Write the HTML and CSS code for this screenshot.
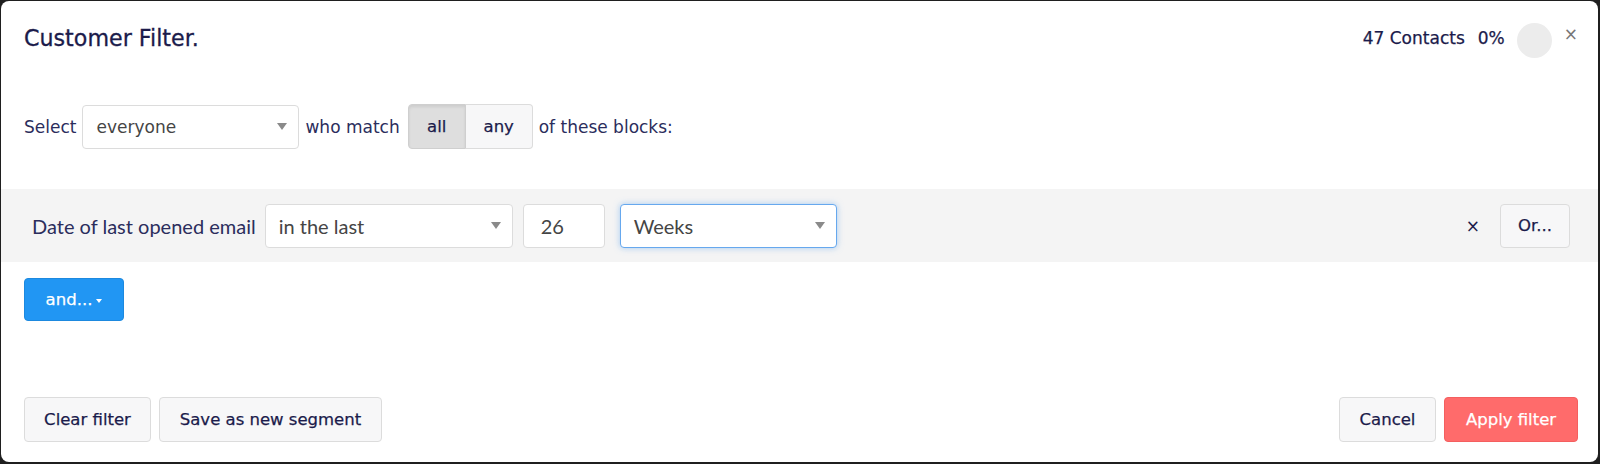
FILE: index.html
```html
<!DOCTYPE html>
<html lang="en">
<head>
    <meta charset="UTF-8">
    <meta name="viewport" content="width=device-width, initial-scale=1.0">
    <title>Customer Filter</title>

    <link rel="stylesheet" href="styles.css">
</head>
<body>

<div class="modal">
    <header class="modal-header">
        <h1 class="title">Customer Filter.</h1>
        <div class="stats">
            <span class="count">47 Contacts</span>
            <span class="percent">0%</span>
            <span class="progress"></span>
            <span class="close">&times;</span>
        </div>
    </header>

    <div class="match-row">
        <span class="label">Select</span>
        <div class="dropdown dropdown-who"><span>everyone</span><i class="caret"></i></div>
        <span class="label">who match</span>
        <div class="toggle">
            <button class="toggle-btn active">all</button>
            <button class="toggle-btn">any</button>
        </div>
        <span class="label">of these blocks:</span>
    </div>

    <div class="block">
        <span class="block-label">Date of last opened email</span>
        <div class="dropdown dropdown-op"><span>in the last</span><i class="caret"></i></div>
        <div class="number-box">26</div>
        <div class="dropdown dropdown-unit focused"><span>Weeks</span><i class="caret"></i></div>
        <span class="spacer"></span>
        <span class="remove">&times;</span>
        <button class="btn btn-or">Or...</button>
    </div>

    <div class="and-row">
        <button class="btn-and">and...<i class="caret caret-white"></i></button>
    </div>

    <footer class="modal-footer">
        <button class="btn btn-clear">Clear filter</button>
        <button class="btn btn-save">Save as new segment</button>
        <span class="spacer"></span>
        <button class="btn btn-cancel">Cancel</button>
        <button class="btn btn-apply">Apply filter</button>
    </footer>
</div>

</body>
</html>
```

FILE: styles.css
```css
body{
    margin: 0;
    padding: 0;
    background-color: #1f1f1f;
    font-family: "DejaVu Sans", Inter, sans-serif;
    color: #1b1b4b;
}

.modal{
    margin: 1px 2px 0 1px;
    height: 461px;
    background-color: white;
    border-radius: 8px;
    display: flex;
    flex-direction: column;
}

.modal-header{
    height: 74px;
    padding: 0 20px 0 23px;
    display: flex;
    align-items: center;
    justify-content: space-between;
}

.title{
    margin: 0;
    font-size: 22.2px;
    font-weight: normal;
    -webkit-text-stroke: 0.3px #1b1b4b;
}

.stats{
    display: flex;
    align-items: center;
    font-size: 17px;
    -webkit-text-stroke: 0.25px #1b1b4b;
}

.percent{
    margin-left: 13px;
}

.progress{
    width: 35px;
    height: 35px;
    border-radius: 50%;
    background-color: #ececec;
    margin: 4px 0 0 12px;
}

.close{
    align-self: flex-start;
    margin: 5px 0 0 12px;
    font-size: 17px;
    color: #777;
    -webkit-text-stroke: 0;
}

.match-row{
    margin-top: 29px;
    padding-left: 23px;
    display: flex;
    align-items: center;
    gap: 6px;
    font-size: 17px;
}

.label{
    color: #2b2d5c;
}

.dropdown{
    height: 44px;
    border: 1px solid #dcdcdc;
    border-radius: 4px;
    background-color: white;
    display: flex;
    align-items: center;
    justify-content: space-between;
    padding: 0 11px 0 13px;
    box-sizing: border-box;
    color: #454545;
}

.dropdown-who{
    width: 217px;
}

.caret{
    width: 0;
    height: 0;
    border-left: 5px solid transparent;
    border-right: 5px solid transparent;
    border-top: 7px solid #8a8a8a;
}

.caret-white{
    display: inline-block;
    border-left-width: 3px;
    border-right-width: 3px;
    border-top: 4px solid white;
    vertical-align: middle;
    margin-left: 4px;
}

.toggle{
    display: flex;
    margin-left: 2px;
}

.toggle-btn{
    height: 45px;
    font-family: inherit;
    font-size: 16.5px;
    color: #1b1b4b;
    -webkit-text-stroke: 0.25px #1b1b4b;
    border: 1px solid #dcdcdc;
    background-color: #f7f7f8;
    padding: 0;
}

.toggle-btn:first-child{
    width: 58px;
    border-radius: 4px 0 0 4px;
    background-color: #dedede;
    border-color: #cfcfcf;
    box-shadow: inset 0 2px 3px rgba(0,0,0,0.08);
}

.toggle-btn:last-child{
    width: 67px;
    border-left: none;
    border-radius: 0 4px 4px 0;
}

.block{
    margin-top: 40px;
    height: 73px;
    background-color: #f4f4f4;
    display: flex;
    align-items: center;
    padding: 0 28px 0 31px;
    font-family: Lato, "Noto Sans", sans-serif;
    font-size: 20px;
}

.block-label{
    color: #2b2d5c;
    margin-right: 9px;
}

.dropdown-op{
    width: 248px;
}

.number-box{
    width: 82px;
    height: 44px;
    box-sizing: border-box;
    margin-left: 10px;
    padding-left: 17px;
    display: flex;
    align-items: center;
    border: 1px solid #dcdcdc;
    border-radius: 4px;
    background-color: white;
    color: #454545;
}

.dropdown-unit{
    width: 217px;
    margin-left: 15px;
}

.focused{
    border-color: #66a8ee;
    box-shadow: 0 0 6px rgba(102,168,238,0.55);
}

.spacer{
    flex: 1;
}

.remove{
    font-family: "DejaVu Sans", sans-serif;
    font-size: 17px;
    color: #1b1b4b;
    margin-right: 20px;
}

.btn{
    height: 45px;
    box-sizing: border-box;
    padding: 0;
    font-family: "DejaVu Sans", Inter, sans-serif;
    font-size: 16.5px;
    color: #1b1b4b;
    -webkit-text-stroke: 0.25px #1b1b4b;
    background-color: #f7f7f8;
    border: 1px solid #dcdcdc;
    border-radius: 4px;
}

.btn-or{
    width: 70px;
    height: 44px;
}

.and-row{
    margin-top: 16px;
    padding-left: 23px;
}

.btn-and{
    width: 100px;
    height: 43px;
    padding: 0;
    font-family: "DejaVu Sans", Inter, sans-serif;
    font-size: 16.5px;
    color: white;
    -webkit-text-stroke: 0.25px white;
    background-color: #2196f3;
    border: 1px solid #1d89df;
    border-radius: 4px;
}

.modal-footer{
    margin-top: 76px;
    padding: 0 20px 0 23px;
    display: flex;
    gap: 8px;
}

.btn-clear{
    width: 127px;
}

.btn-save{
    width: 223px;
}

.btn-cancel{
    width: 97px;
}

.btn-apply{
    width: 134px;
    color: white;
    -webkit-text-stroke: 0.25px white;
    background-color: #ff6b6b;
    border-color: #f45f5f;
}
```
